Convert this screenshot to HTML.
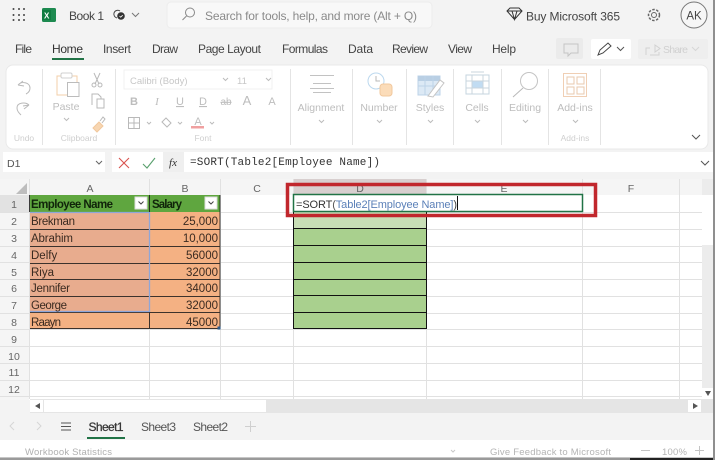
<!DOCTYPE html>
<html><head><meta charset="utf-8"><style>
html,body{margin:0;padding:0;width:715px;height:460px;overflow:hidden;background:#f3f3f3}
svg{display:block;font-family:"Liberation Sans",sans-serif;filter:blur(.3px)}
.tb{font-size:12px;fill:#444}
.rb{font-size:10.5px;fill:#bdbdbd}
.gp{font-size:8.5px;fill:#cfcfcf}
.hd{font-size:10.5px;fill:#666;text-anchor:middle}
.c{font-size:11.5px;fill:#3a2a20}
.r{text-anchor:end}
.ic{fill:none;stroke:#b9b9b9;stroke-width:1}
.ch{fill:none;stroke:#bcbcbc;stroke-width:1}
</style></head><body>
<svg width="715" height="460" viewBox="0 0 715 460" xmlns="http://www.w3.org/2000/svg">
<rect width="715" height="460" fill="#f3f3f3"/>
<!-- top bar -->
<g fill="#444"><circle cx="13.500" cy="9" r="1"/><circle cx="19" cy="9" r="1"/><circle cx="24" cy="9" r="1"/><circle cx="13.500" cy="15" r="1"/><circle cx="19" cy="15" r="1"/><circle cx="24" cy="15" r="1"/><circle cx="13.500" cy="20" r="1"/><circle cx="19" cy="20" r="1"/><circle cx="24" cy="20" r="1"/></g>
<rect x="42" y="8" width="14" height="14" rx="1.500" fill="#1d8a50"/><rect x="42" y="10" width="9" height="10" fill="#107c41"/><text x="44" y="18.500" font-size="8" font-weight="bold" fill="#fff">X</text>
<text x="69" y="20" font-size="12" fill="#444" textLength="35">Book 1</text>
<path d="M117 18a4 4 0 0 1-3-5 4 4 0 0 1 6-2" fill="none" stroke="#444"/><circle cx="121" cy="16" r="3.800" fill="#333"/><path d="M119.500 16l1.200 1.200 2-2" stroke="#fff" fill="none" stroke-width=".8"/>
<path d="M132 13l3.500 3.500 3.500-3.500" fill="none" stroke="#777"/>
<rect x="167" y="2" width="265" height="26" rx="4" fill="#f8f8f8" stroke="#ececec"/>
<circle cx="190" cy="12.500" r="4.500" fill="none" stroke="#888"/><path d="M186.500 16l-4 4" stroke="#888"/>
<text x="205" y="20" font-size="12" fill="#8a8a8a" textLength="212">Search for tools, help, and more (Alt + Q)</text>
<path d="M507 11l3-3h9l3 3-7.500 8.500zM507 11h15M512 11l2.500 8.500 2.500-8.500" fill="none" stroke="#333"/>
<text x="526" y="20.500" font-size="12" fill="#444" textLength="94">Buy Microsoft 365</text>
<circle cx="654" cy="15" r="5.500" fill="none" stroke="#666" stroke-width="1.500" stroke-dasharray="2.500 1.500"/><circle cx="654" cy="15" r="2.500" fill="none" stroke="#666"/>
<circle cx="694" cy="15" r="13" fill="#f6f6f6" stroke="#777"/><text x="694" y="19.500" font-size="11.500" fill="#444" text-anchor="middle">AK</text>
<!-- tabs -->
<text x="15" y="53" class="tb" textLength="17">File</text>
<text x="52" y="53" class="tb" style="fill:#333" textLength="31">Home</text>
<rect x="52" y="58" width="32" height="2" fill="#217346"/>
<text x="103" y="53" class="tb" textLength="28">Insert</text>
<text x="152" y="53" class="tb" textLength="26">Draw</text>
<text x="198" y="53" class="tb" textLength="63">Page Layout</text>
<text x="282" y="53" class="tb" textLength="46">Formulas</text>
<text x="348" y="53" class="tb" textLength="25">Data</text>
<text x="392" y="53" class="tb" textLength="36">Review</text>
<text x="448" y="53" class="tb" textLength="24">View</text>
<text x="492" y="53" class="tb" textLength="24">Help</text>
<rect x="556" y="38" width="27" height="21" rx="2" fill="#ebebeb"/>
<path d="M564 44h14v9h-7l-3 3v-3h-4z" class="ic" style="stroke:#c4c4c4"/>
<rect x="591" y="39" width="40" height="20" rx="2" fill="#fff"/>
<path d="M598 55l2-5 8-7 3 3-8 7z" fill="none" stroke="#444"/><path d="M617 47l3.500 3.500 3.500-3.500" fill="none" stroke="#555"/>
<rect x="638" y="39" width="70" height="20" rx="2" fill="#eeeeee"/>
<path d="M646 55v-7h4M655 45l5 3.500-5 3.500zM650 55h9v-3" fill="none" stroke="#d2d2d2"/>
<text x="663" y="53" font-size="10.500" fill="#d0d0d0" textLength="25">Share</text><path d="M692 47l3.500 3.500 3.500-3.500" fill="none" stroke="#d6d6d6"/>
<!-- ribbon -->
<rect x="6" y="65" width="702" height="84" rx="7" fill="#fff" stroke="#e9e9e9"/>
<g stroke="#e4e4e4"><path d="M42.500 69v76M115.500 69v76M290.500 69v76M352.500 69v76M406.500 69v76M453.500 69v76M501.500 69v76M548.500 69v76M600.500 69v76"/></g>
<path d="M18 85l5-4M18 85l6 1M18 85c3-4 12-3 12 3 0 3-2 5-4 6" class="ic"/>
<path d="M29 105l-5 4M29 105l-6 1M29 105c-3-3-12-3-12 3 0 3 2 5 4 7" class="ic"/>
<text x="24" y="141" class="gp" text-anchor="middle">Undo</text>
<rect x="57" y="76" width="20" height="19" fill="#fff" stroke="#f3cfa8"/><rect x="61" y="73" width="11" height="5" rx="1.500" fill="#fff" stroke="#d0d0d0"/>
<rect x="67.500" y="82.500" width="11.500" height="14" fill="#fff" stroke="#bcbcbc"/>
<text x="66" y="110" class="rb" text-anchor="middle">Paste</text><path d="M64 118l2.500 2.500 2.500-2.500" class="ch"/>
<path d="M94 73l5 11M100 73l-5 11" class="ic"/><circle cx="94" cy="85" r="2" class="ic"/><circle cx="100" cy="85" r="2" class="ic"/>
<path d="M92 105v-11h6l3 3v2" class="ic"/><rect x="97" y="99" width="7" height="9" class="ic"/>
<path d="M93 128l6-6 4 4-6 6z" fill="#f7d6b2" stroke="#f1c89d"/><path d="M100 121l3-4 2 2-3 4" class="ic"/>
<text x="79" y="141" class="gp" text-anchor="middle">Clipboard</text>
<rect x="124" y="70" width="148" height="19" fill="#fff" stroke="#f1f1f1"/>
<text x="130" y="84" font-size="9.500" fill="#c7c7c7">Calibri (Body)</text><path d="M223 78l2.500 2.500 2.500-2.500" class="ch"/>
<text x="237" y="84" font-size="9.500" fill="#c7c7c7">11</text><path d="M266 78l2.500 2.500 2.500-2.500" class="ch"/>
<g font-size="11" fill="#bdbdbd" text-anchor="middle">
<text x="134" y="105" font-weight="bold">B</text><text x="157" y="105" font-style="italic" font-family="Liberation Serif">I</text>
<text x="180" y="105" text-decoration="underline">U</text><text x="203" y="105" text-decoration="underline">D</text>
<text x="226" y="105" font-size="10" text-decoration="line-through">ab</text><text x="247" y="105" font-size="13">A</text><text x="272" y="105" font-size="11">A</text></g>
<path d="M128.500 117.500h11v11h-11zM134 117.500v11M128.500 123h11" class="ic"/><path d="M147 122l2 2 2-2" class="ch"/>
<path d="M162 122l4-4 5 5-4 4z" class="ic"/><path d="M178 122l2 2 2-2" class="ch"/>
<text x="198" y="125" font-size="11" fill="#bdbdbd" text-anchor="middle">A</text><rect x="191" y="126" width="13" height="2.500" fill="#f0a0a0"/><path d="M210 122l2 2 2-2" class="ch"/>
<text x="203" y="141" class="gp" text-anchor="middle">Font</text>
<g stroke="#c2c2c2"><path d="M310 75.500h24M313 83.500h18M310 88.500h24M313 92.500h18"/></g>
<text x="321" y="111" class="rb" text-anchor="middle">Alignment</text><path d="M319 120l2.500 2.500 2.500-2.500" class="ch"/>
<circle cx="376" cy="81" r="8" fill="#fff" stroke="#bcd8ee"/><path d="M376 76v5h4" class="ic"/>
<rect x="380" y="84" width="12" height="12" rx="3" fill="#fbdcb9" stroke="#f1c89d"/>
<text x="379" y="111" class="rb" text-anchor="middle">Number</text><path d="M377 120l2.500 2.500 2.500-2.500" class="ch"/>
<rect x="418" y="76" width="22" height="19" fill="#dce9f5" stroke="#bdd3e8"/><rect x="418" y="76" width="22" height="5" fill="#b9cfe4"/><path d="M425 76v19M433 76v19M418 86h22" stroke="#bdd3e8"/>
<path d="M428 96l12-16 4 3-11 14z" fill="#fff" stroke="#c4c4c4"/>
<text x="430" y="111" class="rb" text-anchor="middle">Styles</text><path d="M428 120l2.500 2.500 2.500-2.500" class="ch"/>
<rect x="466" y="75" width="23" height="19" fill="#fff" stroke="#c6d4df"/><rect x="472" y="81" width="11" height="7" fill="#c1dcf2"/><path d="M472 75v19M483 75v19M466 81h23M466 88h23M471 72h13" stroke="#c9d5de" fill="none"/>
<text x="477" y="111" class="rb" text-anchor="middle">Cells</text><path d="M475 120l2.500 2.500 2.500-2.500" class="ch"/>
<circle cx="529" cy="81" r="8.500" class="ic" style="stroke:#c4c4c4"/><path d="M523 88l-10 9" class="ic"/>
<text x="525" y="111" class="rb" text-anchor="middle">Editing</text><path d="M523 120l2.500 2.500 2.500-2.500" class="ch"/>
<rect x="563.500" y="73.500" width="23" height="23" fill="#fff" stroke="#f0cfb4"/><path d="M567 77h7v7h-7zM577 77h7v7h-7zM567 87h7v7h-7zM577 87h7v7h-7z" fill="none" stroke="#e8c8ae"/>
<text x="575" y="111" class="rb" text-anchor="middle">Add-ins</text><path d="M573 120l2.500 2.500 2.500-2.500" class="ch"/>
<text x="575" y="141" class="gp" text-anchor="middle">Add-ins</text>
<path d="M692 135l4 4 4-4" fill="none" stroke="#555"/>
<!-- formula bar -->
<rect x="3" y="152" width="102" height="20" fill="#fff"/>
<text x="7" y="167" font-size="10.500" fill="#555">D1</text><path d="M96 161l3 3 3-3" fill="none" stroke="#666"/>
<rect x="112" y="152" width="51" height="20" fill="#fff"/>
<rect x="163" y="152" width="21" height="20" fill="#efefef"/>
<path d="M119 158l10 10M129 158l-10 10" stroke="#d9534f" fill="none" stroke-width="1.100"/>
<path d="M143 164l4 4 8-10" stroke="#5aa06e" fill="none" stroke-width="1.100"/>
<text x="173" y="166" font-size="11" font-style="italic" font-family="Liberation Serif" fill="#333" text-anchor="middle">fx</text>
<rect x="184" y="152" width="531" height="20" fill="#fff"/>
<text x="190" y="165" font-family="Liberation Mono" font-size="11" fill="#333" textLength="190">=SORT(Table2[Employee Name])</text>
<path d="M701 161l4 4 4-4" fill="none" stroke="#555"/>
<!-- grid -->
<rect x="0" y="179" width="715" height="221" fill="#fff"/>
<rect x="0" y="179" width="715" height="16" fill="#f5f5f5"/>
<rect x="0" y="179" width="29" height="221" fill="#f5f5f5"/>
<rect x="0" y="195" width="29" height="17" fill="#e2e2e2"/>
<path d="M27 183v11h-11z" fill="#bdbdbd"/>
<rect x="293" y="179" width="133" height="16" fill="#d8cfcf"/>
<g stroke="#e1e1e1">
<path d="M29.500 179v220M149.500 179v220M220.500 179v220M293.500 179v220M426.500 179v220M582.500 179v220M679.500 179v220"/>
<path d="M0 212.500h702M0 229.500h702M0 246.500h702M0 262.500h702M0 279.500h702M0 296.500h702M0 313.500h702M0 329.500h702M0 346.500h702M0 363.500h702M0 380.500h702M0 396.500h702"/>
</g>
<g class="hd"><text class="hd" x="90" y="192">A</text><text class="hd" x="185" y="192">B</text><text class="hd" x="257" y="192">C</text><text class="hd" x="360" y="192">D</text><text class="hd" x="504" y="192">E</text><text class="hd" x="631" y="192">F</text></g>
<g><text class="hd" x="14" y="208">1</text><text class="hd" x="14" y="225">2</text><text class="hd" x="14" y="242">3</text><text class="hd" x="14" y="259">4</text><text class="hd" x="14" y="276">5</text><text class="hd" x="14" y="292">6</text><text class="hd" x="14" y="309">7</text><text class="hd" x="14" y="326">8</text><text class="hd" x="14" y="343">9</text><text class="hd" x="14" y="360">10</text><text class="hd" x="14" y="376">11</text><text class="hd" x="14" y="393">12</text></g>
<!-- table -->
<rect x="30" y="195" width="190" height="17" fill="#5fa63f"/>
<rect x="30" y="212" width="119" height="100" fill="#e8ac8e"/>
<rect x="30" y="312" width="119" height="17" fill="#f4b183"/>
<rect x="149" y="212" width="71" height="117" fill="#f4b183"/>
<g stroke="#1c1c1c" fill="none">
<path d="M29.500 195v17M30 229.500h190M30 246.500h190M30 263.500h190M30 279.500h190M30 296.500h190M30 312.500h190M30 328.500h190M149.500 195v17M149.500 312v17M220 195v134" stroke-opacity=".85"/>
</g>
<path d="M30 212.500h119M149.500 212v100M30 311.500h119" stroke="#8ea6d9" fill="none" stroke-width="1.300"/>
<rect x="217.500" y="326.500" width="3" height="3" fill="#2c5a8c"/>
<rect x="135" y="197" width="12" height="12" fill="#fff" stroke="#ddd"/><path d="M138.500 201.500l2.500 2.500 2.500-2.500" fill="none" stroke="#444"/>
<rect x="205" y="197" width="12" height="12" fill="#fff" stroke="#ddd"/><path d="M208.500 201.500l2.500 2.500 2.500-2.500" fill="none" stroke="#444"/>
<text x="31" y="208" class="c" style="font-weight:bold;fill:#10240a" textLength="82">Employee Name</text>
<text x="152" y="208" class="c" style="font-weight:bold;fill:#10240a" textLength="30">Salary</text>
<text x="31" y="225" class="c" textLength="44">Brekman</text><text x="218" y="225" class="c r">25,000</text>
<text x="31" y="242" class="c" textLength="42">Abrahim</text><text x="218" y="242" class="c r">10,000</text>
<text x="31" y="259" class="c">Delfy</text><text x="218" y="259" class="c r">56000</text>
<text x="31" y="276" class="c">Riya</text><text x="218" y="276" class="c r">32000</text>
<text x="31" y="292" class="c" textLength="39">Jennifer</text><text x="218" y="292" class="c r">34000</text>
<text x="31" y="309" class="c" textLength="36">George</text><text x="218" y="309" class="c r">32000</text>
<text x="31" y="326" class="c" textLength="30">Raayn</text><text x="218" y="326" class="c r">45000</text>
<!-- D spill -->
<rect x="294" y="212" width="132" height="117" fill="#a9d08e"/>
<rect x="294" y="212" width="132" height="16" fill="#c8deb6"/>
<path d="M293.500 212v117M426.500 212v117M294 228.500h132M294 245.500h132M294 262.500h132M294 279.500h132M294 295.500h132M294 312.500h132M293 328.500h134" stroke="#111" fill="none"/>
<!-- edit -->
<rect x="293.500" y="194.500" width="289" height="17" fill="#fff" stroke="#217346" stroke-width="1.500"/>
<text x="296" y="208" font-size="11" fill="#333" textLength="161">=SORT<tspan fill="#555">(</tspan><tspan fill="#5b80b8">Table2[Employee Name]</tspan><tspan fill="#444">)</tspan></text>
<path d="M457.500 196v14" stroke="#111"/>
<rect x="287.500" y="184.500" width="308" height="31" fill="none" stroke="#c1272d" stroke-width="3.500"/>
<!-- vertical scrollbar -->
<rect x="702" y="179" width="13" height="221" fill="#ececec"/>
<rect x="702" y="195" width="11" height="50" fill="#fff"/>
<rect x="702" y="388" width="11" height="12" fill="#fff"/><path d="M705 391h6l-3 5z" fill="#555"/>
<!-- horizontal scrollbar -->
<rect x="30" y="399" width="684" height="14" fill="#e5e5e5"/>
<rect x="30" y="400" width="13" height="12" fill="#fff"/><path d="M40 403v6l-5-3z" fill="#555"/>
<rect x="44" y="400" width="222" height="12" fill="#fff"/>
<rect x="688" y="400" width="13" height="12" fill="#fff"/><path d="M693 403v6l5-3z" fill="#555"/>
<!-- sheet tabs -->
<rect x="0" y="413" width="715" height="27" fill="#f3f3f3"/>
<path d="M14 422l-4 4 4 4" fill="none" stroke="#d5d5d5"/><path d="M37 422l4 4-4 4" fill="none" stroke="#d5d5d5"/>
<path d="M61 423h10M61 426.500h10M61 430h10" stroke="#555"/>
<text x="88.500" y="431" font-size="12" fill="#333" stroke="#333" stroke-width=".25" textLength="35">Sheet1</text>
<rect x="87" y="437" width="38" height="2" fill="#217346"/>
<text x="141" y="431" font-size="12" fill="#555" textLength="35">Sheet3</text>
<text x="193" y="431" font-size="12" fill="#555" textLength="35">Sheet2</text>
<path d="M250.500 421v11M245 426.500h11" stroke="#cfcfcf"/>
<!-- status bar -->
<rect x="0" y="440" width="713" height="17" fill="#fff"/>
<text x="25" y="455" font-size="9.500" fill="#b0b0b0" textLength="87">Workbook Statistics</text>
<path d="M451 450l2 2 2-2" fill="none" stroke="#c8c8c8"/>
<text x="490" y="455" font-size="9.500" fill="#b4b4b4" textLength="121">Give Feedback to Microsoft</text>
<path d="M641 450.500h9" stroke="#c4c4c4"/>
<text x="662" y="455" font-size="9.500" fill="#b4b4b4" textLength="25">100%</text>
<path d="M699.500 446v9M695 450.500h9" stroke="#c4c4c4"/>
<rect x="0" y="457.500" width="715" height="2.500" fill="#9a9a9a"/>
<rect x="630" y="458" width="85" height="2" fill="#222"/>
<rect x="713" y="0" width="2" height="460" fill="#8f8f8f"/>
</svg>
</body></html>
